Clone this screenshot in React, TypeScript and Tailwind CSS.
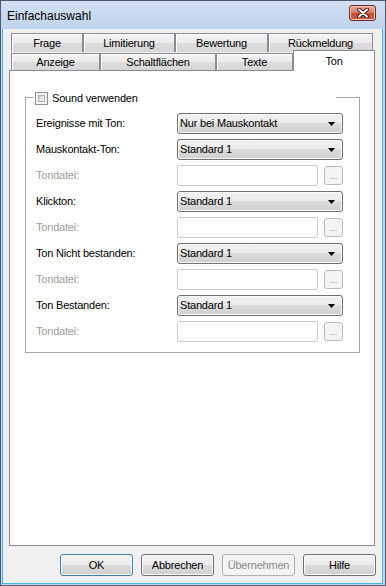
import type { ReactNode } from "react";

const BTN =
  "flex h-[22px] w-[73px] items-center justify-center rounded-[3px] border bg-[linear-gradient(#f2f2f2,#ebebeb_50%,#dddddd_50%,#cfcfcf)] shadow-[inset_0_0_0_1px_#fbfbfb]";

const TAB =
  "flex items-center justify-center border border-b-0 border-[#898c95] bg-[linear-gradient(#f3f3f3,#ebebeb_50%,#dedede_50%,#d6d6d6)] shadow-[inset_0_1px_0_#fff,inset_1px_0_0_#fff]";

type Row = { label: string; value?: string };

const rows: Row[] = [
  { label: "Ereignisse mit Ton:", value: "Nur bei Mauskontakt" },
  { label: "Mauskontakt-Ton:", value: "Standard 1" },
  { label: "Tondatei:" },
  { label: "Klickton:", value: "Standard 1" },
  { label: "Tondatei:" },
  { label: "Ton Nicht bestanden:", value: "Standard 1" },
  { label: "Tondatei:" },
  { label: "Ton Bestanden:", value: "Standard 1" },
  { label: "Tondatei:" },
];

function Combo({ value }: { value: string }) {
  return (
    <div className="flex h-[21px] w-[166px] items-center justify-between rounded-[3px] border border-[#707070] bg-[linear-gradient(#f2f2f2,#ebebeb_50%,#dddddd_50%,#cfcfcf)] pl-[2px] pr-[7px] shadow-[inset_0_0_0_1px_#fafafa]">
      <span className="text-black">{value}</span>
      <svg width="7" height="4" viewBox="0 0 7 4">
        <polygon points="0,0 7,0 3.5,4" fill="#000" />
      </svg>
    </div>
  );
}

function FileField() {
  return (
    <div className="flex h-[21px] w-[166px] items-center gap-[6px]">
      <div className="h-[21px] w-[141px] rounded-[2px] border border-[#c9cccf] bg-white" />
      <div className="flex h-[19px] w-[19px] items-end justify-center rounded-[3px] border border-[#b9bcbf] bg-[#f4f4f4] pb-[3px] text-[9px] leading-none text-[#9a9a9a]">
        ...
      </div>
    </div>
  );
}

function Tab({ w, children }: { w: number; children: ReactNode }) {
  return (
    <div className={TAB} style={{ width: w }}>
      {children}
    </div>
  );
}

export default function App() {
  return (
    <div className="flex h-[586px] w-[386px] flex-col border border-[#4d5b6c] bg-[#c4d7ee] font-[family-name:'Liberation_Sans',Arial,sans-serif] text-[11px] tracking-[-0.2px] text-black">
      {/* title bar */}
      <div className="flex h-[28px] shrink-0 items-start justify-between bg-linear-to-b from-[#d2e1f3] to-[#bfd3eb] pr-[9px]">
        <span className="mt-[6px] pl-[6px] text-[12px] tracking-normal">Einfachauswahl</span>
        <div className="mt-[4px] flex h-[16px] w-[27px] items-center justify-center rounded-[3px] border border-[#6b2a22] bg-[linear-gradient(#e8a899,#d98272_45%,#c44d35_55%,#c9614a)] shadow-[inset_0_0_0_1px_#eec1b6]">
          <svg width="12" height="10" viewBox="0 0 12 10">
            <path d="M2 1.5 L10 8.5 M10 1.5 L2 8.5" stroke="#4a1a14" strokeWidth="4" strokeLinecap="round" />
            <path d="M2 1.5 L10 8.5 M10 1.5 L2 8.5" stroke="#fff" strokeWidth="2" strokeLinecap="round" />
          </svg>
        </div>
      </div>

      {/* client area */}
      <div className="mb-[1px] ml-[1px] mr-[2px] flex flex-1 flex-col border-x border-b border-[#3fb9e9] bg-[#f0f0f0] pt-[4px]">
        {/* tab rows */}
        <div className="ml-[8px] flex h-[19px]">
          <Tab w={72}>Frage</Tab>
          <Tab w={92}>Limitierung</Tab>
          <Tab w={93}>Bewertung</Tab>
          <Tab w={105}>Rückmeldung</Tab>
        </div>
        <div className="ml-[8px] flex h-[18px] items-end">
          <Tab w={89}>Anzeige</Tab>
          <Tab w={116}>Schaltflächen</Tab>
          <Tab w={77}>Texte</Tab>
          <div className="relative z-10 -mb-px flex h-[21px] w-[82px] items-start justify-center border border-b-0 border-[#898c95] bg-white pt-[2px]">
            Ton
          </div>
        </div>

        {/* tab panel */}
        <div className="ml-[6px] h-[476px] w-[366px] shrink-0 border border-[#898c95] bg-white pl-[15px] pt-[26px]">
          <div className="relative w-[335px] border border-[#a5a5a5] pb-[10px] pl-[10px] pt-[15px]">
            <div className="absolute left-[7px] top-[-6px] flex h-[13px] w-[303px] items-center gap-[4px] bg-white pl-[2px]">
              <div className="h-[13px] w-[13px] border border-[#8e8f8f] bg-[#f4f4f4] p-[2px]">
                <div className="h-full w-full border border-[#aeb1b4] bg-linear-to-br from-[#cfd1d3] to-[#f7f7f7]" />
              </div>
              <span>Sound verwenden</span>
            </div>
            <div className="flex flex-col gap-[5px]">
              {rows.map((r, i) => (
                <div key={i} className="flex h-[21px] items-center">
                  <span className={`w-[141px] ${r.value ? "text-black" : "text-[#9c9c9c]"}`}>
                    {r.label}
                  </span>
                  {r.value ? <Combo value={r.value} /> : <FileField />}
                </div>
              ))}
            </div>
          </div>
        </div>

        {/* buttons */}
        <div className="mt-[8px] flex justify-end gap-[8px] pr-[6px]">
          <div className={`${BTN} border-[#3c7fb1] shadow-[inset_0_0_0_1px_#cde8f8]`}>OK</div>
          <div className={`${BTN} border-[#707070]`}>Abbrechen</div>
          <div className="flex h-[22px] w-[73px] items-center justify-center rounded-[3px] border border-[#adb2b5] bg-[#f4f4f4] text-[#8a8a8a]">
            Übernehmen
          </div>
          <div className={`${BTN} border-[#707070]`}>Hilfe</div>
        </div>
      </div>
    </div>
  );
}
